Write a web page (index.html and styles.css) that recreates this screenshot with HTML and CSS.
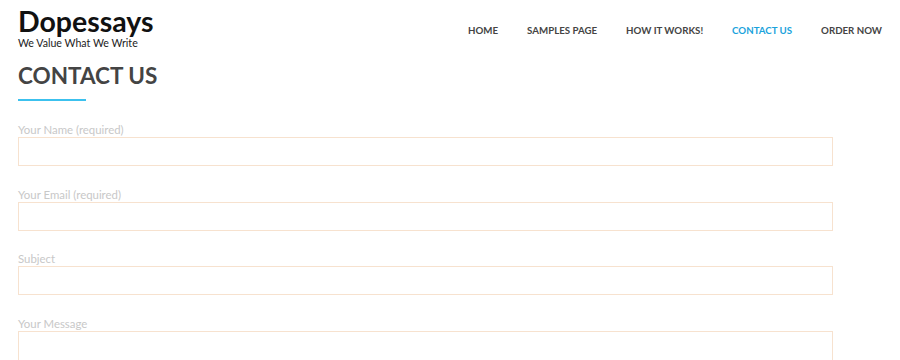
FILE: index.html
```html
<!DOCTYPE html>
<html lang="en">
<head>
    <meta charset="UTF-8">
    <meta name="viewport" content="width=device-width, initial-scale=1.0">
    <title>Contact Us - Dopessays</title>
    <link rel="stylesheet" href="styles.css">
</head>
<body>
    <!-- Header -->
    <header class="site-header">
        <div class="branding">
            <div class="site-title">Dopessays</div>
            <div class="site-tagline">We Value What We Write</div>
        </div>
        <nav class="main-nav">
            <a href="#">HOME</a>
            <a href="#">SAMPLES PAGE</a>
            <a href="#">HOW IT WORKS!</a>
            <a href="#" class="current">CONTACT US</a>
            <a href="#">ORDER NOW</a>
        </nav>
    </header>

    <!-- Contact form -->
    <main class="content">
        <h1 class="page-title">CONTACT US</h1>
        <form class="contact-form">
            <label class="field">
                <span>Your Name (required)</span>
                <input type="text">
            </label>
            <label class="field">
                <span>Your Email (required)</span>
                <input type="email">
            </label>
            <label class="field">
                <span>Subject</span>
                <input type="text">
            </label>
            <label class="field">
                <span>Your Message</span>
                <textarea rows="6"></textarea>
            </label>
        </form>
    </main>
</body>
</html>
```

FILE: styles.css
```css
body {
    margin: 0;
    font-family: Lato, 'Liberation Sans', Arial, sans-serif;
    background: #fff;
    color: #444;
}

/* Header */
.site-header {
    display: flex;
    justify-content: space-between;
    align-items: flex-start;
    padding: 6px 18px 0;
}

.site-title {
    font-size: 28.5px;
    font-weight: 700;
    line-height: 30px;
    color: #111;
}

.site-tagline {
    font-size: 10.6px;
    line-height: 13px;
    margin-top: 1px;
    color: #222;
}

.main-nav {
    display: flex;
    gap: 29px;
    padding-top: 18px;
}

.main-nav a {
    font-size: 9.7px;
    font-weight: 700;
    color: #444;
    text-decoration: none;
}

.main-nav a.current {
    color: #1aa3dc;
}

/* Content */
.content {
    padding: 0 18px;
}

.page-title {
    font-size: 22.5px;
    font-weight: 700;
    line-height: 30px;
    margin: 11px 0 0;
    color: #444;
    padding-bottom: 10px;
    position: relative;
}

.page-title::after {
    content: '';
    position: absolute;
    left: 0;
    bottom: 0;
    width: 68px;
    height: 2px;
    background: #3cc1ee;
}

.contact-form {
    width: 815px;
    padding-top: 21px;
}

.field {
    display: block;
    margin-bottom: 20.5px;
}

.field span {
    display: block;
    font-size: 11.4px;
    line-height: 15px;
    color: #c8c8c8;
}

.field input,
.field textarea {
    display: block;
    box-sizing: border-box;
    width: 100%;
    height: 29px;
    border: 1px solid #f7e2cf;
    border-radius: 0;
    background: #fff;
    font: inherit;
}

.field textarea {
    height: 120px;
    resize: none;
}
```
